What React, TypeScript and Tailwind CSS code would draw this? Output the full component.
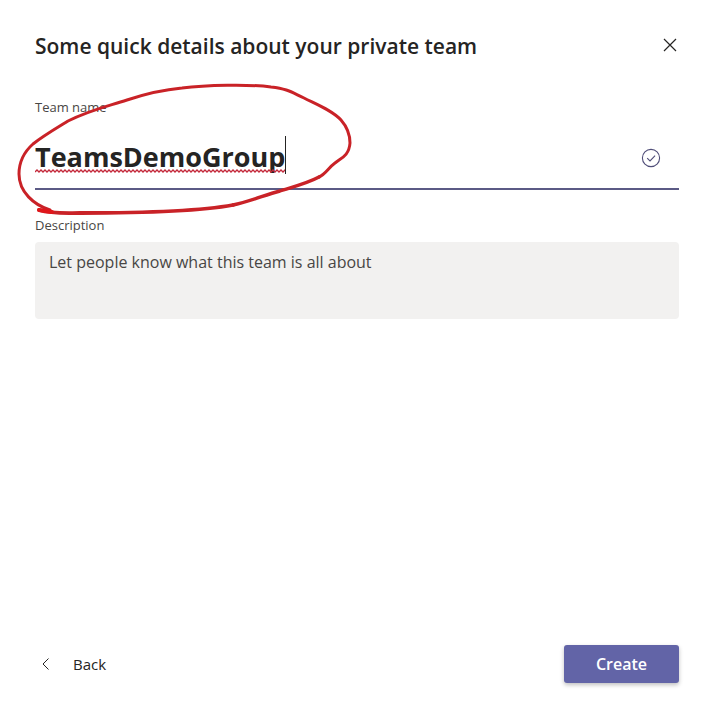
const squiggle =
  "M0 3" + Array.from({ length: 63 }, (_, i) => ` L${i * 4 + 2} 1 L${i * 4 + 4} 3`).join("");

function CloseIcon() {
  return (
    <svg width="14" height="14" viewBox="0 0 14 14" fill="none" stroke="#252423" strokeWidth="1.2" aria-hidden="true">
      <path d="M1 1l12 12M13 1L1 13" />
    </svg>
  );
}

function ValidIcon() {
  return (
    <svg width="20" height="20" viewBox="0 0 20 20" fill="none" stroke="#4f4d78" strokeWidth="1.1" aria-hidden="true">
      <circle cx="10" cy="10" r="8.6" />
      <path d="M6.2 10.2l2.8 2.7 5.1-5.2" />
    </svg>
  );
}

function InkCircle() {
  return (
    <svg
      className="pointer-events-none absolute left-0 top-0"
      width="370"
      height="230"
      viewBox="0 0 370 230"
      fill="none"
      stroke="#c92227"
      strokeLinecap="round"
      strokeLinejoin="round"
      aria-hidden="true"
    >
      <path
        strokeWidth="3"
        d="M50 210C34 205 19 192 19 174C19 161 24 152 33 144C43 136 55 129 68 121C90 110 105 107 127 100C145 94 160 90 182 88C205 85 250 84 271 87C288 89 291 92 304 98C318 105 333 111 341 120C348 128 350 136 350 143C349 156 341 158 335 163C328 168 326 174 319 177"
      />
      <path strokeWidth="3.4" d="M319 177C308 183 293 187 280 191C265 195 248 202 233 205" />
      <path strokeWidth="3.8" d="M233 205C190 213 115 213 80 213C65 213 52 214 39 210" />
      <path stroke="#e0171b" strokeWidth="4" d="M39 210L52 212" />
    </svg>
  );
}

export default function App() {
  return (
    <form
      className="relative flex min-h-screen flex-col bg-white pt-8 pr-[34px] pb-[35px] pl-[35px] font-['Open_Sans','Noto_Sans',sans-serif] text-[#252423]"
      onSubmit={(e) => e.preventDefault()}
    >
      <header className="flex items-start justify-between">
        <h1 className="text-[21px] leading-7 font-semibold">Some quick details about your private team</h1>
        <button type="button" aria-label="Close" className="mt-1 p-0.5">
          <CloseIcon />
        </button>
      </header>

      <label htmlFor="team-name" className="mt-9 text-[13px] leading-[22px] text-[#484644]">
        Team name
      </label>
      <div className="relative mt-2.5 flex h-[62px] items-center border-b-2 border-[#5b5a85] pr-[18px]">
        <input
          id="team-name"
          type="text"
          defaultValue="TeamsDemoGroup"
          spellCheck={false}
          className="h-full min-w-0 flex-1 bg-transparent pb-1 text-[27px] font-bold outline-none"
        />
        <svg
          className="absolute top-[41px] left-0"
          width="251"
          height="4"
          fill="none"
          stroke="#c4283a"
          strokeWidth="1.3"
          aria-hidden="true"
        >
          <path d={squiggle} />
        </svg>
        <span className="absolute top-2 left-[250px] h-[38px] w-px bg-[#252423]" />
        <ValidIcon />
      </div>

      <label htmlFor="description" className="mt-6 text-[13px] leading-[22px] text-[#484644]">
        Description
      </label>
      <textarea
        id="description"
        placeholder="Let people know what this team is all about"
        className="mt-1.5 h-[77px] resize-none rounded bg-[#f2f1f0] px-3.5 py-2 text-base leading-6 outline-none placeholder:text-[#484644]"
      />

      <footer className="mt-auto flex items-center justify-between">
        <button type="button" className="flex items-center gap-6 pl-[7px] text-[15px]">
          <svg width="7" height="12" viewBox="0 0 7 12" fill="none" stroke="#252423" aria-hidden="true">
            <path d="M6.5 0.5L1 6l5.5 5.5" />
          </svg>
          Back
        </button>
        <button
          type="submit"
          className="h-[38px] w-[115px] rounded-[3px] bg-[#6264a7] text-base font-semibold text-white shadow-[0_2px_4px_rgba(0,0,0,0.25)]"
        >
          Create
        </button>
      </footer>

      <InkCircle />
    </form>
  );
}
